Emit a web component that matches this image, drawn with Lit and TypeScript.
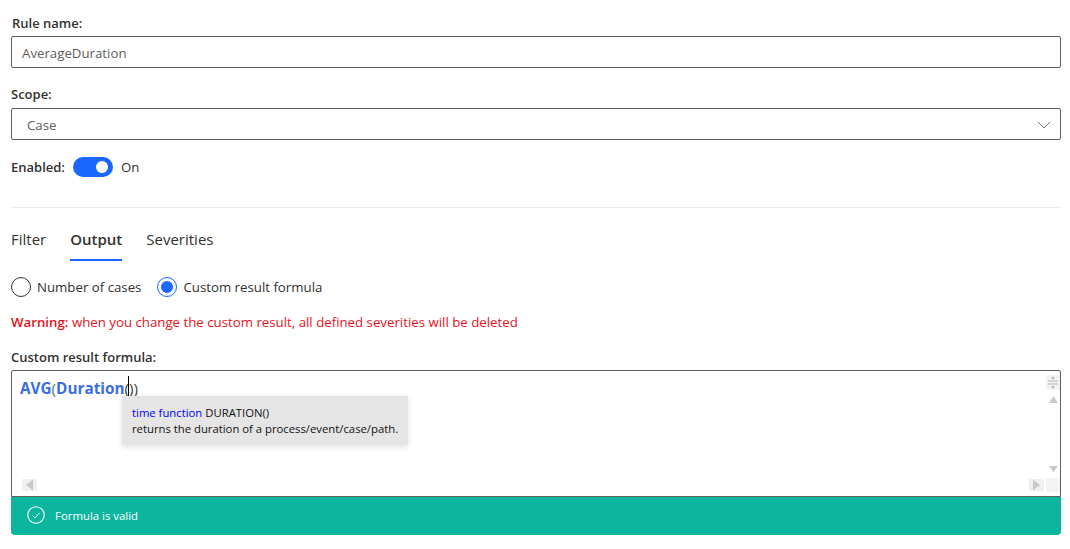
import { LitElement, html, css } from "lit";
import { customElement } from "lit/decorators.js";

@customElement("app-root")
export class AppRoot extends LitElement {
  static styles = css`
    :host { display: block; width: 1070px; height: 549px; overflow: hidden; background: #fff; font-family: "Open Sans", "Noto Sans", sans-serif; font-size: 13.25px; color: #323130; box-sizing: border-box; }
    .page { display: flex; flex-direction: column; padding: 14px 9px 0 11px; }
    .label { font-weight: 600; font-size: 13px; line-height: 18px; height: 18px; color: #323130; }
    .label.first { padding-left: 1px; }
    .box { height: 32px; box-sizing: border-box; border: 1px solid #605e5c; border-radius: 2px; display: flex; align-items: center; color: #605e5c; font-size: 13.25px; margin-top: 4px; padding-top: 1px; }
    .input { padding-left: 10px; }
    .select { padding-left: 15px; padding-right: 9px; justify-content: space-between; margin-top: 5px; }
    .gap1 { margin-top: 17px; }
    .enabled { display: flex; align-items: center; margin-top: 17px; height: 20px; }
    .toggle { width: 40px; height: 20px; border-radius: 10px; background: #1a66ff; margin-left: 8px; display: flex; align-items: center; justify-content: flex-end; padding-right: 5px; box-sizing: border-box; }
    .knob { width: 12px; height: 12px; border-radius: 50%; background: #fff; }
    .on { margin-left: 8px; color: #323130; }
    .divider { height: 1px; background: #edebe9; margin-top: 30px; }
    .tabs { display: flex; gap: 24px; margin-top: 21px; font-size: 15px; }
    .tab { height: 31px; line-height: 20px; box-sizing: border-box; color: #323130; }
    .tab.active { font-weight: 600; border-bottom: 2px solid #1a66ff; height: 32px; }
    .radios { display: flex; align-items: center; margin-top: 16px; height: 20px; }
    .radio { width: 20px; height: 20px; box-sizing: border-box; border-radius: 50%; border: 1px solid #323130; margin-right: 6px; display: flex; align-items: center; justify-content: center; }
    .radio.sel { border-color: #1a66ff; margin-left: 16px; }
    .dot { width: 12px; height: 12px; border-radius: 50%; background: #1a66ff; }
    .warn { margin-top: 16px; height: 18px; line-height: 18px; color: #e81123; }
    .warn b { font-weight: 600; }
    .flabel { margin-top: 17px; }
    .editor { position: relative; height: 127px; margin-top: 4px; border: 1px solid #605e5c; border-radius: 2px 2px 0 0; box-sizing: border-box; }
    .code { padding: 7px 0 0 8px; font-size: 15.3px; line-height: 21px; color: #3b6ee0; }
    .code b { font-weight: 700; }
    .code .open { color: #4f7396; }
    .code .close { color: #3a3f4a; }
    .caret { position: absolute; left: 116px; top: 5px; width: 1px; height: 20px; background: #000; }
    .tip { position: absolute; left: 110px; top: 25px; width: 286px; height: 49px; box-sizing: border-box; background: #e5e5e5; box-shadow: 0 2px 6px rgba(0,0,0,.12); padding: 9px 0 0 10px; font-size: 11.3px; line-height: 16px; color: #111; }
    .tip i { font-style: normal; color: #0000ff; }
    .sb { position: absolute; display: block; }
    .corner { left: 1034px; top: 107px; width: 14px; height: 14px; background: #f3f3f3; }
    .status { height: 38px; background: #0cb59e; border-radius: 0 0 4px 4px; display: flex; align-items: center; padding: 0 0 2px 16px; box-sizing: border-box; color: #fff; font-size: 11.4px; gap: 10px; }
  `;

  render() {
    return html`<div class="page">
      <div class="label first">Rule name:</div>
      <div class="box input">AverageDuration</div>
      <div class="label gap1">Scope:</div>
      <div class="box select">Case
        <svg width="14" height="8" viewBox="0 0 14 8"><path d="M1 1l6 6 6-6" fill="none" stroke="#737373" stroke-width="1"/></svg>
      </div>
      <div class="enabled"><span class="label">Enabled:</span><div class="toggle"><div class="knob"></div></div><span class="on">On</span></div>
      <div class="divider"></div>
      <div class="tabs"><div class="tab">Filter</div><div class="tab active">Output</div><div class="tab">Severities</div></div>
      <div class="radios">
        <div class="radio"></div><span>Number of cases</span>
        <div class="radio sel"><div class="dot"></div></div><span>Custom result formula</span>
      </div>
      <div class="warn"><b>Warning:</b> when you change the custom result, all defined severities will be deleted</div>
      <div class="label flabel">Custom result formula:</div>
      <div class="editor">
        <div class="code"><b>AVG</b><span class="open">(</span><b>Duration</b><span class="close">())</span></div>
        <div class="caret"></div>
        <div class="tip"><i>time function</i> DURATION()<br>returns the duration of a process/event/case/path.</div>
        <svg class="sb" style="left:1034px;top:4px" width="14" height="15" viewBox="0 0 14 15"><rect width="14" height="15" fill="#f3f3f3"/><path d="M2 6h10M2 9h10" stroke="#b5b5b5"/><path d="M7 1l2 3H5zM7 14l2-3H5z" fill="#b5b5b5"/></svg>
        <svg class="sb" style="left:1037px;top:25px" width="9" height="7" viewBox="0 0 9 7"><path d="M4.5 0L9 7H0z" fill="#c8c8c8"/></svg>
        <svg class="sb" style="left:1037px;top:95px" width="9" height="6" viewBox="0 0 9 6"><path d="M4.5 6L0 0h9z" fill="#c8c8c8"/></svg>
        <svg class="sb" style="left:10px;top:108px" width="15" height="12" viewBox="0 0 15 12"><rect width="15" height="12" fill="#f0f0f0"/><path d="M4 6l7-5.5v11z" fill="#c8c8c8"/></svg>
        <svg class="sb" style="left:1017px;top:108px" width="15" height="12" viewBox="0 0 15 12"><rect width="15" height="12" fill="#f0f0f0"/><path d="M11 6L4 .5v11z" fill="#c8c8c8"/></svg>
        <div class="sb corner"></div>
      </div>
      <div class="status">
        <svg width="18" height="18" viewBox="0 0 18 18"><circle cx="9" cy="9" r="8.2" fill="none" stroke="#fff" stroke-width="1.1"/><path d="M5.5 9.5l2.4 2.4 4.6-5" fill="none" stroke="#fff" stroke-width="1"/></svg>
        <span>Formula is valid</span>
      </div>
    </div>`;
  }
}
